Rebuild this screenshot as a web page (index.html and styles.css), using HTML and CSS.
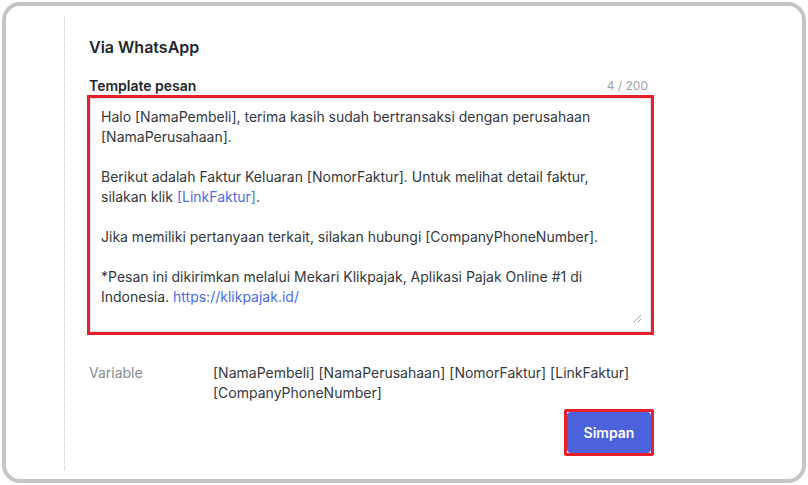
FILE: index.html
```html
<!DOCTYPE html>
<html lang="id">
<head>
<meta charset="utf-8">
<title>Via WhatsApp</title>
<link rel="stylesheet" href="styles.css">
</head>
<body>
<div class="frame">
  <div class="section">
    <h2 class="title">Via WhatsApp</h2>
    <div class="label-row">
      <span class="label">Template pesan</span>
      <span class="counter">4 / 200</span>
    </div>
    <div class="highlight">
      <div class="textarea">
        <p>Halo [NamaPembeli], terima kasih sudah bertransaksi dengan perusahaan<br>[NamaPerusahaan].</p>
        <p>Berikut adalah Faktur Keluaran [NomorFaktur]. Untuk melihat detail faktur,<br>silakan klik <span class="link">[LinkFaktur]</span>.</p>
        <p>Jika memiliki pertanyaan terkait, silakan hubungi [CompanyPhoneNumber].</p>
        <p>*Pesan ini dikirimkan melalui Mekari Klikpajak, Aplikasi Pajak Online #1 di<br>Indonesia. <span class="link">https://klikpajak.id/</span></p>
        <svg class="grip" width="9" height="9" viewBox="0 0 9 9"><path d="M8 1 L1 8 M8 5 L5 8" stroke="#9aa0a8" stroke-width="1" fill="none"/></svg>
      </div>
    </div>
    <div class="var-row">
      <span class="var-label">Variable</span>
      <span class="var-values">[NamaPembeli] [NamaPerusahaan] [NomorFaktur] [LinkFaktur]<br>[CompanyPhoneNumber]</span>
    </div>
    <div class="actions">
      <div class="btn-highlight"><button class="btn">Simpan</button></div>
    </div>
  </div>
</div>
</body>
</html>
```
FILE: styles.css
```css
* { box-sizing: border-box; }
html, body { margin: 0; padding: 0; background: #ffffff; }
body { font-family: Inter, "Noto Sans", "Liberation Sans", sans-serif; color: #343940; }

.frame {
  width: 804px;
  height: 481px;
  margin: 2px;
  border: 4px solid #c4c5c5;
  border-radius: 18px;
  padding: 11px 0 9px 58px;
  background: #fff;
}

.section {
  height: 100%;
  border-left: 1px dotted #c2c4c8;
  padding: 20px 0 0 24px;
  width: 588px;
}

.title {
  margin: 0;
  font-size: 16px;
  line-height: 20px;
  font-weight: 600;
  color: #23272e;
}

.label-row {
  margin-top: 18px;
  height: 20px;
  display: flex;
  justify-content: space-between;
  align-items: center;
  padding-right: 4px;
}
.label { font-size: 14px; font-weight: 600; color: #23272e; }
.counter { font-size: 12px; color: #a0a3a8; }

.highlight {
  margin-left: -2px;
  width: 567px;
  border: 3px solid #e8202c;
}
.textarea {
  position: relative;
  border: 1px solid #dcdee2;
  height: 234px;
  padding: 8px 10px 0 10px;
  font-size: 14px;
  line-height: 20px;
  color: #343940;
  white-space: nowrap;
}
.textarea p { margin: 0 0 20px 0; }
.link { color: #4c6bef; }
.grip { position: absolute; right: 8px; bottom: 8px; }

.var-row {
  margin-top: 28px;
  display: flex;
  font-size: 14px;
  line-height: 20px;
}
.var-label { width: 124px; flex: none; color: #878b93; }
.var-values { color: #343940; white-space: nowrap; }

.actions {
  display: flex;
  justify-content: flex-end;
  margin-top: 6px;
  width: 565px;
}
.btn-highlight {
  border: 3px solid #e8202c;
  border-radius: 2px;
}
.btn {
  display: block;
  width: 84px;
  height: 41px;
  border: none;
  border-radius: 4px;
  background: #4c62dc;
  color: #ffffff;
  font-family: Inter, "Noto Sans", "Liberation Sans", sans-serif;
  font-size: 14px;
  font-weight: 600;
}
```
